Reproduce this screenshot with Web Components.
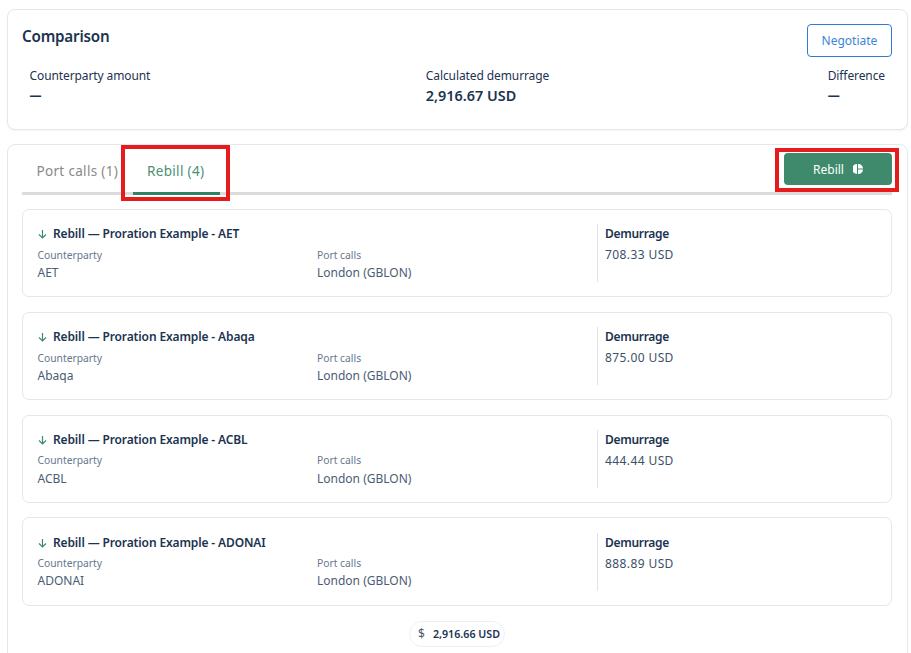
<!DOCTYPE html>
<html><head><meta charset="utf-8"><style>
html,body{margin:0;padding:0;background:#fff;height:653px;overflow:hidden}
body{font-family:"Noto Sans","Liberation Sans",sans-serif;color:#1b3350;padding:9px 3px 0 7px;box-sizing:border-box}
</style></head><body>
<comparison-card></comparison-card>
<rebill-panel>
<rebill-row name="AET" amount="708.33 USD"></rebill-row>
<rebill-row name="Abaqa" amount="875.00 USD"></rebill-row>
<rebill-row name="ACBL" amount="444.44 USD"></rebill-row>
<rebill-row name="ADONAI" amount="888.89 USD"></rebill-row>
</rebill-panel>
<script>
class CompCard extends HTMLElement{constructor(){super();this.attachShadow({mode:'open'}).innerHTML=`<style>
:host{display:block;box-sizing:border-box;height:121px;border:1px solid #e3e7ef;border-radius:8px;box-shadow:0 1px 2px #0000000d;padding:14px 15px 0 14px;background:#fff}
.top{display:flex;justify-content:space-between;align-items:flex-start}
h2{margin:0;font-size:15.2px;font-weight:600;line-height:24px;letter-spacing:-.2px;color:#1b3350}
button{box-sizing:border-box;width:85px;height:33px;border:1px solid #2f7bd1;border-radius:4px;background:#fff;color:#3a85d8;font:12px "Noto Sans",sans-serif;padding:0}
.cols{display:flex;justify-content:space-between;padding:0 7px 0 7.5px;margin-top:10px;font-size:12px;line-height:18px}
.mid{margin-right:3px}
.v{margin-top:1px;font-size:14.4px;font-weight:600;line-height:20px}
.dash{font-size:12px;font-weight:800}
.lbl{letter-spacing:-.1px}
</style><div class="top"><h2>Comparison</h2><button>Negotiate</button></div>
<div class="cols"><div><div class="lbl">Counterparty amount</div><div class="v dash">—</div></div>
<div class="mid"><div class="lbl">Calculated demurrage</div><div class="v">2,916.67 USD</div></div>
<div><div class="lbl">Difference</div><div class="v dash">—</div></div></div>`}}
customElements.define('comparison-card',CompCard);
class Panel extends HTMLElement{constructor(){super();this.attachShadow({mode:'open'}).innerHTML=`<style>
:host{display:block;position:relative;box-sizing:border-box;height:540px;margin-top:14px;border:1px solid #e3e7ef;border-radius:8px;padding:0 15px 0 14px;background:#fff}
.head{display:flex;justify-content:space-between;border-bottom:3px solid #dcdcdc;box-sizing:border-box;height:50px}
.tabs{display:flex}
.tab{font-size:13.5px;line-height:20px;padding-top:16px;color:#8a8a8a;box-sizing:border-box;height:50px;letter-spacing:.32px}
.t1{width:111px;padding-left:14.5px}
.t2{width:87px;padding-left:14px;color:#4b8f74;border-bottom:3px solid #2f8465}
.btn{box-sizing:border-box;width:108px;height:32px;margin-top:8px;border-radius:4px;background:#3f8a6c;color:#fff;font-size:12px;display:flex;align-items:center;justify-content:center;gap:9px}
.list{display:flex;flex-direction:column;gap:14.5px;margin-top:14px}
.sum{display:flex;justify-content:center;margin-top:15.3px}
.pill{display:flex;align-items:center;gap:8px;height:26px;box-sizing:border-box;border:1px solid #eef0f4;border-radius:13px;padding:0 4px 0 8px;font-size:10.7px;font-weight:600;color:#1b3350}
.pill i{font-style:normal;font-weight:400;font-size:12px;color:#4a5d75}
.mark{position:absolute;border:4px solid #e61c1c;box-sizing:border-box;pointer-events:none}
</style><div class="head"><div class="tabs"><div class="tab t1">Port calls (1)</div><div class="tab t2">Rebill (4)</div></div>
<div class="btn">Rebill <svg width="10" height="10" viewBox="0 0 10 10" fill="#fff"><path d="M4 0v10A5 5 0 0 1 4 0ZM5 0A5 5 0 0 1 10 4.500H5ZM5 5.500H10A5 5 0 0 1 5 10Z"/></svg></div></div>
<div class="list"><slot></slot></div>
<div class="sum"><div class="pill"><i>$</i>2,916.66 USD</div></div>
<div class="mark" style="left:113px;top:0;width:109px;height:56px"></div>
<div class="mark" style="left:767px;top:3px;width:124px;height:44px"></div>`}}
customElements.define('rebill-panel',Panel);
class Row extends HTMLElement{constructor(){super();this.attachShadow({mode:'open'})}
connectedCallback(){const n=this.getAttribute('name'),a=this.getAttribute('amount');this.shadowRoot.innerHTML=`<style>
:host{display:block;box-sizing:border-box;height:88.3px;border:1px solid #e3e7ef;border-radius:7px;padding:14.2px 14px 0;background:#fff}
.g{display:grid;grid-template-columns:280px 280px 1fr;grid-template-rows:20px 38px;height:58px}
.t{grid-column:1/3;font-size:12px;font-weight:600;line-height:20px;display:flex;align-items:center;gap:6px;letter-spacing:-.13px;color:#1b3350}
.t svg{margin-left:1px}
.c{font-size:10.3px;line-height:15px;color:#66778c;margin-top:3.6px}
.v{font-size:12px;line-height:20px;color:#4a5d75;margin-top:.2px}
.d{grid-column:3;grid-row:1/3;border-left:1px solid #dfe3e8;padding-left:7px}
.d b{display:block;font-size:12px;font-weight:600;line-height:20px;letter-spacing:-.3px}
.d span{display:block;font-size:12px;line-height:20px;margin-top:1px;color:#3c5068;letter-spacing:.4px}
</style><div class="g"><div class="t"><svg width="9" height="10" viewBox="0 0 9 10" fill="none" stroke="#3f8a6c" stroke-width="1.2"><path d="M4.500 1v8M1 5.500 4.500 9 8 5.500"/></svg>Rebill — Proration Example - ${n}</div>
<div class="d"><b>Demurrage</b><span>${a}</span></div>
<div style="grid-row:2;padding-left:.5px"><div class="c">Counterparty</div><div class="v">${n}</div></div>
<div style="grid-row:2"><div class="c">Port calls</div><div class="v">London (GBLON)</div></div></div>`}}
customElements.define('rebill-row',Row);
</script></body></html>
